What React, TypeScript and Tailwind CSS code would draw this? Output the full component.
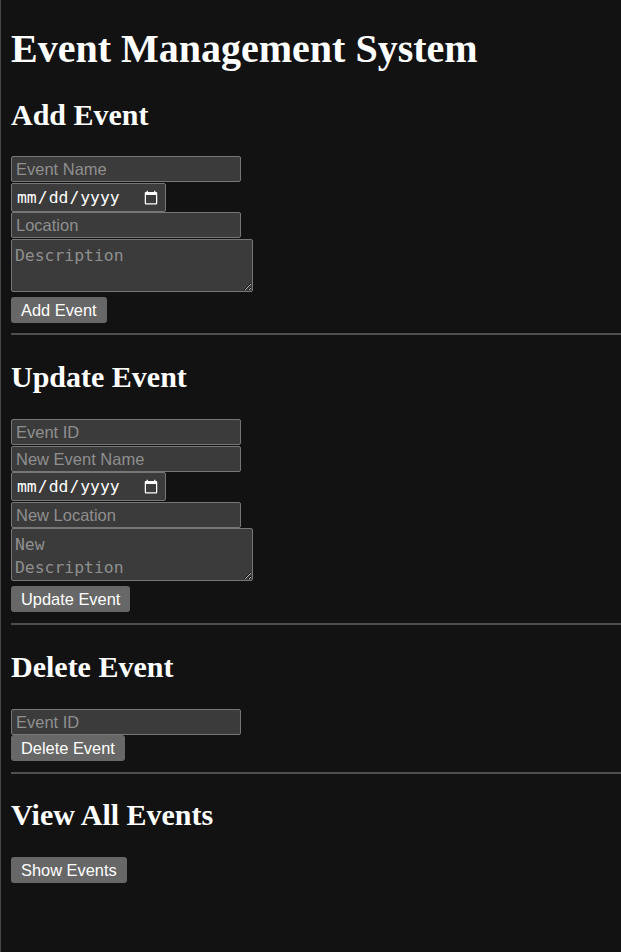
const textInput =
  "block h-[26px] w-[230px] rounded-[2px] border border-[#767676] bg-[#3b3b3b] px-[4px] pt-[1px] [font-family:'Liberation_Sans',Arial,sans-serif] text-[16.5px] text-white placeholder:text-[#8f8f8f] outline-none";
const dateInput =
  "block h-[29px] w-[155px] rounded-[2px] border border-[#767676] bg-[#3b3b3b] px-[4px] pt-[1px] [font-family:'DejaVu_Sans_Mono',monospace] text-[16.4px] text-white [color-scheme:dark] outline-none";
const textArea =
  "block h-[53px] w-[242px] rounded-[2px] border border-[#767676] bg-[#3b3b3b] px-[3px] pt-[4px] pb-0 [font-family:'DejaVu_Sans_Mono',monospace] text-[16.4px] leading-[23px] text-white placeholder:text-[#8f8f8f] [color-scheme:dark] outline-none";
const button =
  "block h-[26px] rounded-[3px] bg-[#676767] px-[10px] [font-family:'Liberation_Sans',Arial,sans-serif] text-[16.4px] text-white";
const heading =
  "[font-family:'Liberation_Serif','Times_New_Roman',serif] text-[30px] font-bold leading-[34px] text-white";

export default function App() {
  return (
    <div className="min-h-[952px] border-l border-[#474747] bg-[#121212] pl-[10px]">
      <div className="flex flex-col items-start">
        <h1 className="mt-[26px] [font-family:'Liberation_Serif','Times_New_Roman',serif] text-[40px] font-bold leading-[46px] text-white">
          Event Management System
        </h1>

        {/* add */}
        <h2 className={`mt-[26px] ${heading}`}>Add Event</h2>
        <input type="text" placeholder="Event Name" className={`mt-[24px] ${textInput}`} />
        <input type="date" className={`mt-[1px] ${dateInput}`} />
        <input type="text" placeholder="Location" className={textInput} />
        <textarea placeholder="Description" className={`mt-[1px] ${textArea}`} />
        <button className={`mt-[5px] ${button}`}>Add Event</button>
        <hr className="mt-[10px] h-[2px] w-full border-0 bg-[#4f4f4f]" />

        {/* update */}
        <h2 className={`mt-[25px] ${heading}`}>Update Event</h2>
        <input type="text" placeholder="Event ID" className={`mt-[25px] ${textInput}`} />
        <input type="text" placeholder="New Event Name" className={`mt-[1px] ${textInput}`} />
        <input type="date" className={dateInput} />
        <input type="text" placeholder="New Location" className={`mt-[1px] ${textInput}`} />
        <textarea placeholder={"New\nDescription"} className={textArea} />
        <button className={`mt-[5px] ${button}`}>Update Event</button>
        <hr className="mt-[11px] h-[2px] w-full border-0 bg-[#4f4f4f]" />

        {/* delete */}
        <h2 className={`mt-[25px] ${heading}`}>Delete Event</h2>
        <input type="text" placeholder="Event ID" className={`mt-[25px] ${textInput}`} />
        <button className={button}>Delete Event</button>
        <hr className="mt-[11px] h-[2px] w-full border-0 bg-[#4f4f4f]" />

        {/* view */}
        <h2 className={`mt-[24px] ${heading}`}>View All Events</h2>
        <button className={`mt-[25px] ${button}`}>Show Events</button>
      </div>
    </div>
  );
}
